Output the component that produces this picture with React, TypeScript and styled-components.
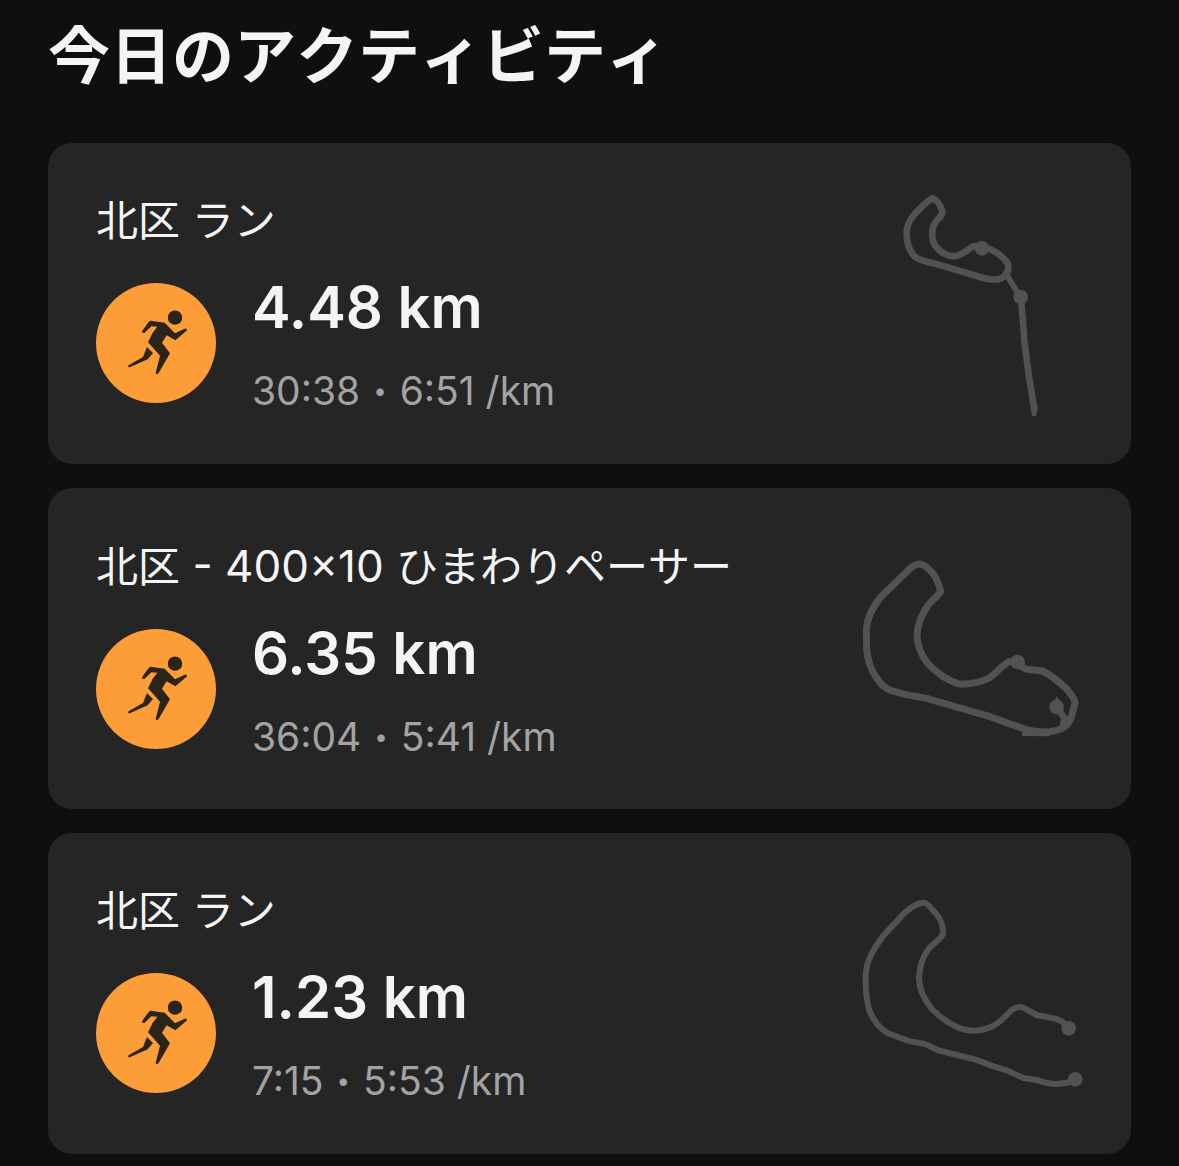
import React from "react";
import styled, { createGlobalStyle } from "styled-components";

const GlobalStyle = createGlobalStyle`
  * {
    box-sizing: border-box;
  }
  body {
    margin: 0;
    background: #0f0f0f;
    color: #f4f4f4;
    font-family: Inter, "Noto Sans CJK JP", sans-serif;
  }
`;

const Page = styled.main`
  padding: 13px 48px 12px;
`;

const Heading = styled.h1`
  margin: 0 0 42px;
  font-size: 62px;
  line-height: 88px;
  font-weight: 700;
  font-kerning: none;
  white-space: nowrap;
`;

const CardList = styled.ul`
  display: flex;
  flex-direction: column;
  gap: 24px;
  margin: 0;
  padding: 0;
  list-style: none;
`;

const Card = styled.li`
  display: flex;
  justify-content: space-between;
  gap: 24px;
  padding: 48px;
  border-radius: 24px;
  background: #252525;
`;

const Details = styled.div`
  display: flex;
  flex-direction: column;
  gap: 32px;
  min-width: 0;
`;

const Name = styled.h2`
  margin: 0;
  font-size: 42px;
  line-height: 60px;
  font-weight: 400;
  font-kerning: none;
`;

const Latin = styled.span`
  font-size: 44px;
`;

const Summary = styled.div`
  display: flex;
  align-items: flex-start;
  gap: 36px;
`;

const Badge = styled.svg`
  flex: none;
  width: 120px;
  height: 120px;
  border-radius: 50%;
  background: #fd9d37;
  fill: #2b2419;
`;

const Figures = styled.div`
  display: flex;
  flex-direction: column;
  gap: 36px;
`;

const Distance = styled.p`
  margin: 0;
  font-size: 58px;
  line-height: 48px;
  font-weight: 600;
  white-space: nowrap;
`;

const Pace = styled.p`
  display: flex;
  align-items: center;
  gap: 13px;
  margin: 0;
  color: #a3a3a3;
  font-size: 39px;
  line-height: 48px;
  white-space: nowrap;
`;

const Separator = styled.span`
  font-size: 24px;
`;

const RouteMap = styled.svg`
  flex: none;
  width: 225px;
  height: 225px;
  overflow: visible;
  fill: none;
  stroke: #525252;
  stroke-linejoin: round;
`;

const Dot = styled.circle`
  fill: #525252;
  stroke: none;
`;

function RunnerBadge() {
  return (
    <Badge viewBox="48 39 360 360" role="img" aria-label="ラン">
      <circle cx="285" cy="143" r="21.5" />
      <path d="M211 152L254 158L285 190L314 176Q319 175 321 180L319 183L286 211L260 196L246 218L270 250L236 309Q233 314 228 311L227 308L240 257L204 217L218 188L232 170L214 169L194 188Q190 191 186 187L187 182L206 156Z" />
      <path d="M201 231L219 249L203 268L151 291Q145 293 144 288L147 285L189 261Z" />
    </Badge>
  );
}

function ParkRoute() {
  return (
    <RouteMap viewBox="-66 33 675 675" aria-hidden="true">
      <path
        strokeWidth="20"
        d="M158 55C145 59 128 77 107 99C86 121 80 138 80 163C81 193 89 216 107 232C120 242 144 245 165 251L310 294C335 301 360 300 370 291C382 280 389 265 383 250C372 235 354 219 337 211C315 199 300 197 280 199C260 211 245 228 220 229C193 228 165 205 159 181C153 155 159 134 172 119C183 108 190 102 186 91C181 75 172 60 158 55Z"
      />
      <path strokeWidth="17" d="M377 279L420 351" />
      <path strokeWidth="20" d="M423 352L434 492L447 590L463 688" />
      <path fill="#525252" stroke="none" d="M452 680L474 680L468 708L456 708Z" />
      <Dot cx="306" cy="205" r="22" />
      <Dot cx="422" cy="351" r="22" />
    </RouteMap>
  );
}

function TrackRoute() {
  return (
    <RouteMap viewBox="24 -27 675 675" aria-hidden="true">
      <path
        strokeWidth="21"
        d="M211 57C196 57 188 63 178 73L93 155C71 182 49 216 49 260L50 310C52 345 64 378 82 402C91 416 106 431 124 437L165 448L230 460L330 489L420 515L525 553C556 562 604 565 635 551C652 543 660 532 666 510L675 475C675 456 658 444 648 430C625 409 601 389 578 378L530 373C511 366 494 346 476 350C454 363 436 388 414 401C385 414 352 419 325 416C290 406 256 380 234 356C212 329 202 302 201 273C202 239 214 210 234 181C251 162 267 149 272 139C267 119 258 91 240 76C231 67 222 58 211 57Z"
      />
      <path strokeWidth="20" d="M628 499L644 520L637 550" />
      <path fill="#525252" stroke="none" d="M516 573L516 562L550 558L600 571L600 574Z" />
      <path fill="#525252" stroke="none" d="M621 453L611 472L631 472Z" />
      <Dot cx="503" cy="351" r="22" />
      <Dot cx="620" cy="486" r="22" />
    </RouteMap>
  );
}

function ShortRoute() {
  return (
    <RouteMap viewBox="24 -12 675 675" aria-hidden="true">
      <path
        strokeWidth="18"
        d="M655 430L643 415Q630 404 612 400L560 390L530 374C515 363 500 363 484 376C463 396 452 414 423 426C388 440 355 440 327 429C301 417 267 394 246 372C224 346 208 312 207 281C208 251 216 216 237 190C252 174 272 163 278 148C281 130 275 107 259 87C247 73 232 54 222 53C211 53 199 58 190 64C173 75 159 86 145 104L101 151C74 187 48 224 47 275C46 314 50 344 57 373C68 404 91 432 112 444L180 469L225 477L268 497L377 524L428 543L472 557L520 579L560 585L595 595C620 599 646 597 675 585"
      />
      <Dot cx="656" cy="430" r="22" />
      <Dot cx="676" cy="583" r="22" />
    </RouteMap>
  );
}

const activities = [
  {
    id: 1,
    name: "北区 ラン",
    distance: "4.48 km",
    time: "30:38",
    pace: "6:51 /km",
    Route: ParkRoute,
  },
  {
    id: 2,
    name: (
      <>
        北区<Latin> - 400×10 </Latin>ひまわりペーサー
      </>
    ),
    distance: "6.35 km",
    time: "36:04",
    pace: "5:41 /km",
    Route: TrackRoute,
  },
  {
    id: 3,
    name: "北区 ラン",
    distance: "1.23 km",
    time: "7:15",
    pace: "5:53 /km",
    Route: ShortRoute,
  },
];

export default function App() {
  return (
    <>
      <GlobalStyle />
      <Page lang="ja">
        <Heading>今日のアクティビティ</Heading>
        <CardList>
          {activities.map(({ id, name, distance, time, pace, Route }) => (
            <Card key={id}>
              <Details>
                <Name>{name}</Name>
                <Summary>
                  <RunnerBadge />
                  <Figures>
                    <Distance>{distance}</Distance>
                    <Pace>
                      <span>{time}</span>
                      <Separator>•</Separator>
                      <span>{pace}</span>
                    </Pace>
                  </Figures>
                </Summary>
              </Details>
              <Route />
            </Card>
          ))}
        </CardList>
      </Page>
    </>
  );
}
